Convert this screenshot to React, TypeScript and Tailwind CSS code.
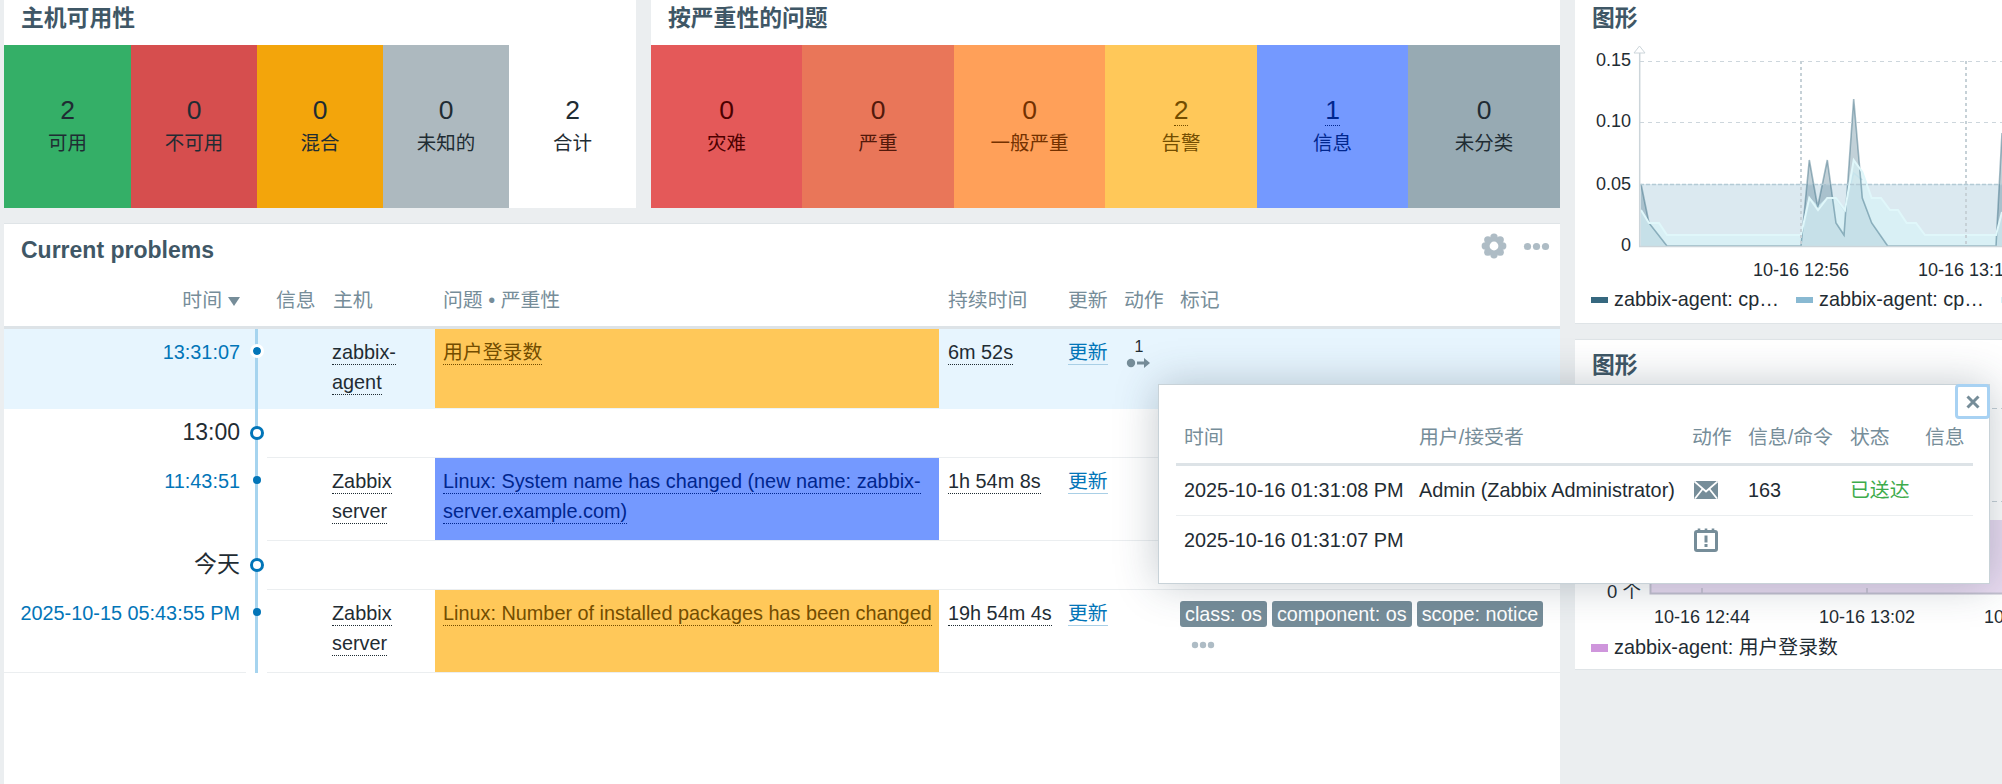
import React from "react";

const font = '"Liberation Sans","Noto Sans CJK SC",sans-serif';

function Tile({ n, label, bg, color, dotted }: { n: string; label: string; bg: string; color: string; dotted?: boolean }) {
  return (
    <div className={`flex flex-col items-center justify-center ${bg} ${color}`}>
      <div className="h-[33px] text-[26.5px] leading-[33px]">
        <span className={dotted ? "inline-block h-[32px] border-b border-dotted border-current" : ""}>{n}</span>
      </div>
      <div className="h-[33px] text-[19.5px] leading-[33px]">{label}</div>
    </div>
  );
}

function Dotted({ children, cls = "" }: { children: React.ReactNode; cls?: string }) {
  return <span className={`border-b border-dotted border-current pb-[1px] ${cls}`}>{children}</span>;
}

function UpdateLink() {
  return <span className="border-b border-[#a9cfe6] pb-[1px] text-[#0275b8]">更新</span>;
}

function Dots({ cls }: { cls: string }) {
  return (
    <svg viewBox="0 0 30 10" className={cls}>
      <circle cx="5" cy="5" r="4" fill="#aebcc5" />
      <circle cx="15" cy="5" r="4" fill="#aebcc5" />
      <circle cx="25" cy="5" r="4" fill="#aebcc5" />
    </svg>
  );
}

function Gear() {
  const lobes = [0, 45, 90, 135, 180, 225, 270, 315];
  return (
    <svg viewBox="-13 -13 26 26" className="h-[26px] w-[26px]">
      {lobes.map((a) => (
        <circle key={a} cx={8.7 * Math.cos((a * Math.PI) / 180)} cy={8.7 * Math.sin((a * Math.PI) / 180)} r="3.7" fill="#aebcc5" />
      ))}
      <circle r="9" fill="#aebcc5" />
      <circle r="4.4" fill="#fff" />
    </svg>
  );
}

const rowGrid = "grid grid-cols-[242px_21px_58px_110px_504px_121px_56px_56px_388px]";

function Timeline({ dot, halo, top }: { dot?: "small" | "ring"; halo?: boolean; top?: number }) {
  return (
    <div className="relative flex justify-center">
      <div className="w-[3px] bg-[#a6d4ef]" />
      {dot === "small" && (
        <div
          className={`absolute left-[6.5px] h-[8px] w-[8px] rounded-full bg-[#0275b8] ${halo ? "outline-[3px] outline-white" : ""}`}
          style={{ top }}
        />
      )}
      {dot === "ring" && (
        <div className="absolute left-[3.5px] h-[14px] w-[14px] rounded-full border-[3.5px] border-[#0275b8] bg-white" style={{ top }} />
      )}
    </div>
  );
}

function ProblemRow({
  time,
  host,
  problem,
  duration,
  bg,
  pcolor,
  dotTop,
  highlight,
  h,
  last,
  action,
  tags,
}: {
  time: string;
  host: string[];
  problem: string;
  duration: string;
  bg: string;
  pcolor: string;
  dotTop: number;
  highlight?: boolean;
  h: string;
  last?: boolean;
  action?: boolean;
  tags?: boolean;
}) {
  const line = highlight ? "" : "border-b border-[#ebeef0]";
  return (
    <div className={`${rowGrid} ${h} leading-[30px] ${highlight ? "bg-[#e7f5fe]" : ""}`}>
      <div className={`whitespace-nowrap pr-[6px] pt-[8px] text-right text-[#0275b8] ${last ? line : ""}`}>{time}</div>
      <Timeline dot="small" halo={highlight} top={dotTop} />
      <div className={line} />
      <div className={`pl-[7px] pt-[8px] ${line}`}>
        {host.map((t) => (
          <div key={t}>
            <Dotted>{t}</Dotted>
          </div>
        ))}
      </div>
      <div className={`${line} ${highlight ? "border-b border-[#ebf4fa]" : ""}`}>
        <div className={`h-full pl-[8px] pr-[5px] pt-[8px] ${bg} ${pcolor}`}>
          <Dotted>{problem}</Dotted>
        </div>
      </div>
      <div className={`whitespace-nowrap pl-[9px] pt-[8px] ${line}`}>
        <Dotted>{duration}</Dotted>
      </div>
      <div className={`pl-[8px] pt-[8px] ${line}`}>
        <UpdateLink />
      </div>
      <div className={`relative ${line}`}>
        {action && (
          <div className="relative pl-[9px] pt-[11px]">
            <div className="w-[28px] text-center text-[16px] leading-[14px] text-[#1f2c33]">1</div>
            <svg viewBox="0 0 26 12" className="mt-[3px] h-[12px] w-[26px]">
              <circle cx="6" cy="6" r="4.2" fill="#768d99" />
              <path d="M12 6h9" stroke="#768d99" strokeWidth="3" />
              <path d="M19 1l6 5-6 5z" fill="#768d99" />
            </svg>
          </div>
        )}
      </div>
      <div className={`${line} pl-[8px] pt-[11px]`}>
        {tags && (
          <>
            <div className="flex gap-[5px] text-[19.8px] leading-[26px] text-white">
              <span className="rounded-[3px] bg-[#768d99] px-[5px]">class: os</span>
              <span className="rounded-[3px] bg-[#768d99] px-[5px]">component: os</span>
              <span className="rounded-[3px] bg-[#768d99] px-[5px]">scope: notice</span>
            </div>
            <Dots cls="ml-[10px] mt-[14px] h-[8px] w-[26px]" />
          </>
        )}
      </div>
    </div>
  );
}

function GroupRow({ label }: { label: string }) {
  return (
    <div className={`${rowGrid} h-[49px]`}>
      <div className="pr-[6px] pt-[7px] text-right text-[23px] leading-[32px] text-[#1f2c33]">{label}</div>
      <Timeline dot="ring" top={17} />
      <div className="col-span-7 border-b border-[#ebeef0]" />
    </div>
  );
}

function pts(list: number[][]) {
  return list.map((p) => p.join(",")).join(" ");
}

const dark = [
  [1641, 184],
  [1649, 223],
  [1667, 246],
  [1801, 246],
  [1809.3, 160],
  [1817.7, 207],
  [1827.3, 160],
  [1836, 223],
  [1844, 235],
  [1853.7, 99],
  [1862.3, 198],
  [1871.7, 223],
  [1887.7, 246],
  [1996, 246],
  [2002, 133],
];
const pale = [
  [1641, 210],
  [1649, 223],
  [1659, 223],
  [1667, 235],
  [1801, 235],
  [1809.3, 198],
  [1818, 210],
  [1827.3, 198],
  [1836, 198],
  [1845, 210],
  [1853.7, 160],
  [1862.3, 172],
  [1871.7, 198],
  [1881, 198],
  [1890, 210],
  [1898, 210],
  [1906.7, 223],
  [1916, 223],
  [1925, 235],
  [1996, 235],
  [2002, 212],
];
const mid = [
  [1801, 246],
  [1809.3, 198],
  [1818, 207],
  [1827.3, 198],
  [1836, 198],
  [1844, 210],
  [1853.7, 173],
  [1862.3, 180],
];

function Chart1() {
  return (
    <svg viewBox="1575 36 427 247" className="block h-[247px] w-[427px]">
      <rect x="1640" y="184" width="362" height="62" fill="#dbe9f0" />
      <polygon points={pts([[1641, 246], ...dark, [2002, 246]])} fill="#36687f" fillOpacity="0.3" />
      <polygon points={pts([[1641, 246], ...pale, [2002, 246]])} fill="#d8f3f8" fillOpacity="0.62" />
      <polyline points={pts(mid)} fill="none" stroke="#c6e4ec" strokeWidth="1.5" />
      <polyline points={pts(dark)} fill="none" stroke="#36687f" strokeOpacity="0.45" strokeWidth="1.6" />
      <polyline points={pts(pale)} fill="none" stroke="#e0f7fa" strokeWidth="2" />
      <path d="M1640 61.5H2002M1640 122.5H2002" stroke="#cdd6dc" strokeWidth="1" strokeDasharray="4 4" />
      <path d="M1640 184.5H2002" stroke="#b4cbd5" strokeWidth="1.5" strokeDasharray="4 2" />
      <path d="M1801 61V246M1966 61V246" stroke="#c6d1d7" strokeWidth="2" strokeDasharray="3 3" />
      <path d="M1639.7 52V246.5H2002" stroke="#ccd5da" strokeWidth="1.5" fill="none" />
      <path d="M1639.5 46L1645 53H1634Z" fill="#fff" stroke="#ccd5da" strokeWidth="1" />
      <g fontSize="18" fill="#1f2c33" textAnchor="end">
        <text x="1631" y="66">0.15</text>
        <text x="1631" y="127">0.10</text>
        <text x="1631" y="190">0.05</text>
        <text x="1631" y="251">0</text>
      </g>
      <g fontSize="18" fill="#1f2c33" textAnchor="middle">
        <text x="1801" y="276">10-16 12:56</text>
        <text x="1966" y="276">10-16 13:14</text>
      </g>
    </svg>
  );
}

function Chart2() {
  return (
    <svg viewBox="1575 391 427 235" className="block h-[235px] w-[427px]">
      <path d="M1650 408.5H2002M1650 501.5H2002" stroke="#c6d0d6" strokeWidth="1.2" strokeDasharray="5 4" />
      <rect x="1651" y="520" width="351" height="73" fill="#e8daf0" />
      <path d="M1650.5 395V593.5H2002" stroke="#c3c0cf" strokeWidth="2" fill="none" />
      <path d="M1702 588V593M1867 588V593" stroke="#c0bccb" strokeWidth="1.5" />
      <g fontSize="18" fill="#1f2c33" textAnchor="middle">
        <text x="1702" y="623">10-16 12:44</text>
        <text x="1867" y="623">10-16 13:02</text>
        <text x="2032" y="623">10-16 13:20</text>
      </g>
      <text x="1641" y="598" fontSize="18.5" fill="#1f2c33" textAnchor="end">0 个</text>
    </svg>
  );
}

function Legend({ swatch, text }: { swatch: string; text?: string }) {
  return (
    <div className="flex w-[205px] flex-none items-center">
      <div className={`mr-[6px] h-[6px] w-[17px] flex-none ${swatch}`} />
      {text && <span className="whitespace-nowrap text-[19.8px]">{text}</span>}
    </div>
  );
}

function Envelope() {
  return (
    <svg viewBox="0 0 24 18" className="h-[18px] w-[24px]">
      <rect width="24" height="18" rx="1.5" fill="#768d99" />
      <path d="M0.5 0.5L12 10.5L23.5 0.5" fill="none" stroke="#fff" strokeWidth="1.8" />
      <path d="M1 17.5L8.6 8M23 17.5L15.4 8" fill="none" stroke="#fff" strokeWidth="1.8" />
    </svg>
  );
}

function CalendarAlert() {
  return (
    <svg viewBox="0 0 24 24" className="h-[24px] w-[24px]">
      <rect x="1.5" y="3.5" width="21" height="19" rx="1.5" fill="#fff" stroke="#768d99" strokeWidth="3" />
      <path d="M5 0.5V3.5M12 0.5V3.5M19 0.5V3.5" stroke="#768d99" strokeWidth="2.6" />
      <path d="M12 7.5V14.5" stroke="#768d99" strokeWidth="3" />
      <rect x="10.5" y="16" width="3" height="3" fill="#768d99" />
    </svg>
  );
}

export default function App() {
  const head = "text-[22.8px] font-bold text-[#3f5766]";
  const th = "text-[#768d99]";
  return (
    <div
      className="relative flex h-[784px] w-[2002px] overflow-hidden bg-[#ebeef0] text-[19.85px] text-[#1f2c33]"
      style={{ fontFamily: font }}
    >
      <div className="flex w-[1560px] flex-none flex-col pl-[4px]">
        <div className="flex h-[208px] flex-none gap-[15px]">
          <section className="w-[632px] bg-white">
            <h2 className={`h-[45px] pl-[17px] leading-[37px] ${head}`}>主机可用性</h2>
            <div className="grid h-[163px] grid-cols-[127px_126px_126px_126px_127px]">
              <Tile n="2" label="可用" bg="bg-[#34af67]" color="text-[#1f2c33]" />
              <Tile n="0" label="不可用" bg="bg-[#d64e4e]" color="text-[#1f2c33]" />
              <Tile n="0" label="混合" bg="bg-[#f3a50b]" color="text-[#1f2c33]" />
              <Tile n="0" label="未知的" bg="bg-[#adb9bf]" color="text-[#1f2c33]" />
              <Tile n="2" label="合计" bg="bg-white" color="text-[#1f2c33]" />
            </div>
          </section>
          <section className="w-[909px] bg-white">
            <h2 className={`h-[45px] pl-[17px] leading-[37px] ${head}`}>按严重性的问题</h2>
            <div className="grid h-[163px] grid-cols-[151px_152px_151px_152px_151px_152px]">
              <Tile n="0" label="灾难" bg="bg-[#e45959]" color="text-[#4d0000]" />
              <Tile n="0" label="严重" bg="bg-[#e97659]" color="text-[#52190b]" />
              <Tile n="0" label="一般严重" bg="bg-[#ffa059]" color="text-[#733100]" />
              <Tile n="2" label="告警" bg="bg-[#ffc859]" color="text-[#734d00]" dotted />
              <Tile n="1" label="信息" bg="bg-[#7499ff]" color="text-[#00268e]" dotted />
              <Tile n="0" label="未分类" bg="bg-[#97aab3]" color="text-[#1f2c33]" />
            </div>
          </section>
        </div>

        <section className="mt-[15px] flex-1 border-t border-[#dfe4e7] bg-white">
          <div className="flex h-[62px] items-start justify-between">
            <h2 className="pl-[17px] pt-[10px] text-[23px] font-bold leading-[32px] text-[#3f5766]">Current problems</h2>
            <div className="flex items-center pr-[10px] pt-[9px]">
              <Gear />
              <Dots cls="ml-[16px] h-[9px] w-[27px]" />
            </div>
          </div>
          <div className={`${rowGrid} h-[43px] border-b-[3px] border-[#dde3e7] leading-[28px] ${th}`}>
            <div className="flex items-start justify-end pr-[6px]">
              时间
              <svg viewBox="0 0 12 9" className="ml-[6px] mt-[11px] h-[9px] w-[12px]">
                <path d="M0 0H12L6 9Z" fill="#768d99" />
              </svg>
            </div>
            <div />
            <div className="pl-[9px]">信息</div>
            <div className="pl-[8px]">主机</div>
            <div className="pl-[8px]">问题 • 严重性</div>
            <div className="pl-[9px]">持续时间</div>
            <div className="pl-[8px]">更新</div>
            <div className="pl-[8px]">动作</div>
            <div className="pl-[8px]">标记</div>
          </div>
          <ProblemRow
            time="13:31:07"
            host={["zabbix-", "agent"]}
            problem="用户登录数"
            duration="6m 52s"
            bg="bg-[#ffc859]"
            pcolor="text-[#734d00]"
            dotTop={18}
            highlight
            h="h-[80px]"
            action
          />
          <GroupRow label="13:00" />
          <ProblemRow
            time="11:43:51"
            host={["Zabbix", "server"]}
            problem="Linux: System name has changed (new name: zabbix-server.example.com)"
            duration="1h 54m 8s"
            bg="bg-[#7499ff]"
            pcolor="text-[#00268e]"
            dotTop={18}
            h="h-[83px]"
          />
          <GroupRow label="今天" />
          <ProblemRow
            time="2025-10-15 05:43:55 PM"
            host={["Zabbix", "server"]}
            problem="Linux: Number of installed packages has been changed"
            duration="19h 54m 4s"
            bg="bg-[#ffc859]"
            pcolor="text-[#734d00]"
            dotTop={18}
            h="h-[83px]"
            last
            tags
          />
        </section>
      </div>

      <div className="ml-[15px] flex w-[427px] flex-none flex-col gap-[15px]">
        <section className="h-[324px] flex-none border-b border-[#dfe4e7] bg-white">
          <h2 className={`h-[36px] pl-[17px] leading-[37px] ${head}`}>图形</h2>
          <Chart1 />
          <div className="flex h-[34px] items-center overflow-hidden pl-[16px]">
            <Legend swatch="bg-[#36687f]" text="zabbix-agent: cp…" />
            <Legend swatch="bg-[#89b9d2]" text="zabbix-agent: cp…" />
            <Legend swatch="bg-[#d8f3f8]" />
          </div>
        </section>
        <section className="h-[331px] flex-none border-y border-[#dfe4e7] bg-white">
          <h2 className={`h-[51px] pl-[17px] leading-[51px] ${head}`}>图形</h2>
          <Chart2 />
          <div className="flex h-[28px] items-center pl-[16px] pt-[16px]">
            <div className="mr-[6px] h-[8px] w-[17px] flex-none bg-[#cf96dc]" />
            <span className="whitespace-nowrap">zabbix-agent: 用户登录数</span>
          </div>
        </section>
      </div>

      <div className="absolute left-[1158px] top-[384px] h-[200px] w-[832px] border border-[#c8d2d8] bg-white px-[17px] shadow-[0_0_40px_rgba(40,60,80,0.28)]">
        <button className="absolute -right-px -top-px flex h-[35px] w-[35px] items-center justify-center rounded-[4px] border-[3px] border-[#a8d2f3] bg-white">
          <svg viewBox="0 0 14 14" className="h-[14px] w-[14px]">
            <path d="M1.5 1.5L12.5 12.5M12.5 1.5L1.5 12.5" stroke="#768d99" strokeWidth="3" />
          </svg>
        </button>
        <div className="grid grid-cols-[243px_265px_56px_102px_75px_56px] pt-[37px]">
          <div className={`h-[41px] pl-[8px] leading-[30px] ${th}`}>时间</div>
          <div className={`leading-[30px] ${th}`}>用户/接受者</div>
          <div className={`pl-[8px] leading-[30px] ${th}`}>动作</div>
          <div className={`pl-[8px] leading-[30px] ${th}`}>信息/命令</div>
          <div className={`pl-[8px] leading-[30px] ${th}`}>状态</div>
          <div className={`pl-[8px] leading-[30px] ${th}`}>信息</div>

          <div className="col-span-6 h-[3px] bg-[#dde3e7]" />

          <div className="whitespace-nowrap pl-[8px] pt-[9px] leading-[30px]">2025-10-16 01:31:08 PM</div>
          <div className="whitespace-nowrap pt-[9px] leading-[30px]">Admin (Zabbix Administrator)</div>
          <div className="pl-[10px] pt-[15px]">
            <Envelope />
          </div>
          <div className="pl-[8px] pt-[9px] leading-[30px]">163</div>
          <div className="pl-[8px] pt-[9px] leading-[30px] text-[#3dab4b]">已送达</div>
          <div className="h-[49px]" />

          <div className="col-span-6 h-[1px] bg-[#ebeef0]" />

          <div className="whitespace-nowrap pl-[8px] pt-[9px] leading-[30px]">2025-10-16 01:31:07 PM</div>
          <div />
          <div className="pl-[10px] pt-[12px]">
            <CalendarAlert />
          </div>
        </div>
      </div>
    </div>
  );
}
